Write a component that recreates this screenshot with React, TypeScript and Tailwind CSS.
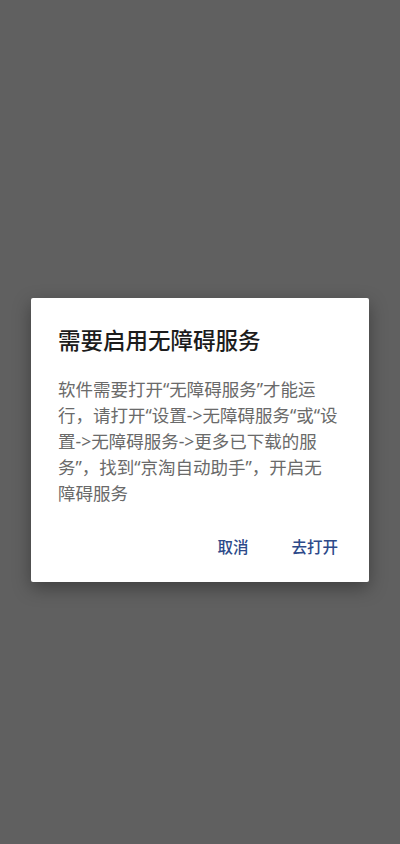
const font = {
  fontFamily: '"Noto Sans", "Noto Sans CJK SC", sans-serif',
};

export default function App() {
  return (
    <div
      className="flex h-[844px] w-full items-center justify-center bg-[#606060]"
      style={font}
    >
      <div className="mt-[35px] flex w-[338px] flex-col rounded-[2px] bg-white shadow-[0_6px_18px_rgba(0,0,0,0.35)]">
        <h1 className="px-[27px] pt-[27px] text-[22.5px] leading-[32px] font-medium text-[#1c1c1c]">
          需要启用无障碍服务
        </h1>
        <p className="mt-[19px] pl-[27px] pr-[28px] text-[17.5px] leading-[26px] text-[#6a6a6a]">
          软件需要打开“无障碍服务”才能运行，请打开“设置-&gt;无障碍服务“或“设置-&gt;无障碍服务-&gt;更多已下载的服务”，找到“京淘自动助手”，开启无
          <br />
          障碍服务
        </p>
        <div className="mt-[18px] flex items-center justify-end gap-[27px] pr-[23px] pb-[10px]">
          <button className="h-[48px] px-2 text-[15.5px] font-medium text-[#2d4a8a]">
            取消
          </button>
          <button className="h-[48px] px-2 text-[15.5px] font-medium text-[#2d4a8a]">
            去打开
          </button>
        </div>
      </div>
    </div>
  );
}
